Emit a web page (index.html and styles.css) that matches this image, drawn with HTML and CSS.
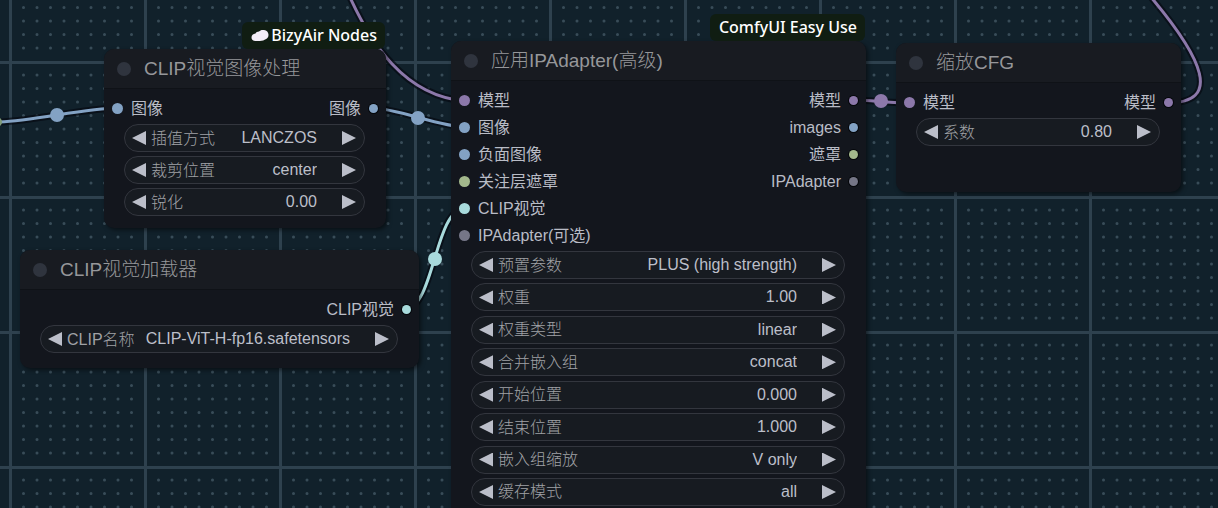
FILE: index.html
```html
<!DOCTYPE html>
<html lang="zh-CN">
<head>
<meta charset="utf-8">
<title>ComfyUI</title>
<link rel="stylesheet" href="styles.css">
</head>
<body>
<main class="canvas">
  <svg class="backdrop" aria-hidden="true">
    <defs>
      <pattern id="grid" x="9" y="61" width="135" height="135" patternUnits="userSpaceOnUse">
        <path class="grid-line" d="M0 1.5H135M1.5 0V135"/>
        <path class="grid-dots" d="M14.500 14H123M14.500 27.500H123M14.500 41H123M14.500 54.500H123M14.500 68H123M14.500 81.500H123M14.500 95H123M14.500 108.500H123M14.500 122H123"/>
      </pattern>
    </defs>
    <rect width="100%" height="100%" fill="url(#grid)"/>
    <g class="link link-image">
      <path class="link-edge" d="M-3 122C27 122 87 108 117 108M372 108C396 108 441 127 465 127"/>
      <path class="link-core" d="M-3 122C27 122 87 108 117 108M372 108C396 108 441 127 465 127"/>
      <circle cx="57" cy="115" r="7"/><circle cx="418" cy="118" r="7"/>
    </g>
    <circle class="port-mask" cx="-3" cy="122" r="5"/>
    <g class="link link-model">
      <path class="link-edge" d="M345 -14C370 45 405 96 465 101M852 100C866 100 895 103 909 103M1167 103C1222 103 1204 60 1150 -4"/>
      <path class="link-core" d="M345 -14C370 45 405 96 465 101M852 100C866 100 895 103 909 103M1167 103C1222 103 1204 60 1150 -4"/>
      <circle cx="881" cy="101" r="7"/>
    </g>
    <g class="link link-clip">
      <path class="link-edge" d="M405 309C434 309 435 209 464 209"/>
      <path class="link-core" d="M405 309C434 309 435 209 464 209"/>
      <circle cx="435" cy="259" r="7"/>
    </g>
  </svg>

  <section class="node node-process">
    <span class="badge"><svg class="cloud" viewBox="0 0 18 13" aria-hidden="true"><path d="M4.500 12C2 12 .5 10.500.5 8.500C.5 6.300 2 4.700 4.500 4.400C5.300 3.200 6.500 2.800 8 2.600C9.200 1.100 11 .7 13 1.100C15.800 1.600 17.400 3.300 17.500 5.800C17.600 8.500 16 10.200 13.600 10.700C11.500 12 8.500 12.200 4.500 12Z"/></svg>BizyAir Nodes</span>
    <header class="node-head"><i class="toggle"></i><h2>CLIP视觉图像处理</h2></header>
    <div class="slots">
      <ul class="inputs"><li class="t-image">图像</li></ul>
      <ul class="outputs"><li class="t-image">图像</li></ul>
    </div>
    <div class="widgets">
      <div class="widget"><button class="prev" aria-label="上一个"></button><label for="interp">插值方式</label><select id="interp"><option>LANCZOS</option></select><button class="next" aria-label="下一个"></button></div>
      <div class="widget"><button class="prev" aria-label="上一个"></button><label for="crop">裁剪位置</label><select id="crop"><option>center</option></select><button class="next" aria-label="下一个"></button></div>
      <div class="widget"><button class="prev" aria-label="减少"></button><label for="sharpen">锐化</label><input id="sharpen" value="0.00"><button class="next" aria-label="增加"></button></div>
    </div>
  </section>

  <section class="node node-loader">
    <header class="node-head"><i class="toggle"></i><h2>CLIP视觉加载器</h2></header>
    <div class="slots">
      <ul class="outputs"><li class="t-clip">CLIP视觉</li></ul>
    </div>
    <div class="widgets">
      <div class="widget"><button class="prev" aria-label="上一个"></button><label for="clip">CLIP名称</label><select id="clip"><option>CLIP-ViT-H-fp16.safetensors</option></select><button class="next" aria-label="下一个"></button></div>
    </div>
  </section>

  <section class="node node-adapter">
    <span class="badge">ComfyUI Easy Use</span>
    <header class="node-head"><i class="toggle"></i><h2>应用IPAdapter(高级)</h2></header>
    <div class="slots">
      <ul class="inputs">
        <li class="t-model">模型</li>
        <li class="t-image">图像</li>
        <li class="t-image">负面图像</li>
        <li class="t-mask">关注层遮罩</li>
        <li class="t-clip">CLIP视觉</li>
        <li class="t-other">IPAdapter(可选)</li>
      </ul>
      <ul class="outputs">
        <li class="t-model">模型</li>
        <li class="t-image">images</li>
        <li class="t-mask">遮罩</li>
        <li class="t-other">IPAdapter</li>
      </ul>
    </div>
    <div class="widgets widgets-spread">
      <div class="widget"><button class="prev" aria-label="上一个"></button><label for="preset">预置参数</label><select id="preset"><option>PLUS (high strength)</option></select><button class="next" aria-label="下一个"></button></div>
      <div class="widget"><button class="prev" aria-label="减少"></button><label for="weight">权重</label><input id="weight" value="1.00"><button class="next" aria-label="增加"></button></div>
      <div class="widget"><button class="prev" aria-label="上一个"></button><label for="wtype">权重类型</label><select id="wtype"><option>linear</option></select><button class="next" aria-label="下一个"></button></div>
      <div class="widget"><button class="prev" aria-label="上一个"></button><label for="combine">合并嵌入组</label><select id="combine"><option>concat</option></select><button class="next" aria-label="下一个"></button></div>
      <div class="widget"><button class="prev" aria-label="减少"></button><label for="start">开始位置</label><input id="start" value="0.000"><button class="next" aria-label="增加"></button></div>
      <div class="widget"><button class="prev" aria-label="减少"></button><label for="end">结束位置</label><input id="end" value="1.000"><button class="next" aria-label="增加"></button></div>
      <div class="widget"><button class="prev" aria-label="上一个"></button><label for="scaling">嵌入组缩放</label><select id="scaling"><option>V only</option></select><button class="next" aria-label="下一个"></button></div>
      <div class="widget"><button class="prev" aria-label="上一个"></button><label for="cache">缓存模式</label><select id="cache"><option>all</option></select><button class="next" aria-label="下一个"></button></div>
    </div>
  </section>

  <section class="node node-cfg">
    <header class="node-head"><i class="toggle"></i><h2>缩放CFG</h2></header>
    <div class="slots">
      <ul class="inputs"><li class="t-model">模型</li></ul>
      <ul class="outputs"><li class="t-model">模型</li></ul>
    </div>
    <div class="widgets">
      <div class="widget"><button class="prev" aria-label="减少"></button><label for="factor">系数</label><input id="factor" value="0.80"><button class="next" aria-label="增加"></button></div>
    </div>
  </section>
</main>
</body>
</html>
```

FILE: styles.css
```css
* { box-sizing: border-box; }

body {
  margin: 0;
  background: #11212b;
  color: #b9bcc6;
  font: 16px/27px "Liberation Sans", "Noto Sans CJK SC", sans-serif;
}

.canvas {
  position: relative;
  height: 100vh;
  overflow: hidden;
}

/* Grid and links */
.backdrop {
  position: absolute;
  inset: 0;
  width: 100%;
  height: 100%;
}
.grid-line { stroke: #2e414e; stroke-width: 3; }
.grid-dots {
  stroke: #384c58;
  stroke-width: 3;
  stroke-linecap: round;
  stroke-dasharray: 0 13.5;
}
.link { fill: none; color: #83a2c4; }
.link-model { color: #8c78aa; }
.link-clip { color: #a8dadc; }
.link circle { fill: currentColor; }
.link-edge { stroke: #060a12; stroke-opacity: .7; stroke-width: 7; }
.link-core { stroke: currentColor; stroke-width: 3; }
.port-mask { fill: #7f9a78; }

/* Nodes sit freely on the canvas */
.node {
  position: absolute;
  background: #13161d;
  border-radius: 10px;
  box-shadow: 2px 2px 4px rgba(0, 0, 0, .5);
}
.node-process { left: 104px; top: 49px; width: 282px; padding-bottom: 12px; }
.node-loader { left: 20px; top: 250px; width: 399px; padding-bottom: 15px; }
.node-adapter { left: 451px; top: 41px; width: 415px; padding-bottom: 15px; }
.node-cfg { left: 896px; top: 43px; width: 285px; padding-bottom: 46px; }

.badge {
  position: absolute;
  right: 1px;
  bottom: 100%;
  display: flex;
  align-items: center;
  gap: 2px;
  padding: 0 8px 0 9px;
  border-radius: 6px;
  background: #101d12;
  color: #fff;
  font: 500 16px/27px "Noto Sans", sans-serif;
  white-space: nowrap;
}
.cloud { width: 18px; height: 13px; fill: #f4eef8; }

.node-head {
  display: flex;
  align-items: center;
  gap: 13px;
  height: 40px;
  padding-left: 13px;
  border-bottom: 1px solid #0f1217;
  border-radius: 10px 10px 0 0;
  background: #181b21;
}
.toggle {
  width: 14px;
  height: 14px;
  border-radius: 50%;
  background: #2f343e;
}
.node-head h2 {
  margin: 0;
  color: #96979a;
  font-size: 19px;
  font-weight: 300;
}

.slots {
  display: flex;
  justify-content: space-between;
  padding: 6px 8px 2px;
}
.slots ul { margin: 0; padding: 0; list-style: none; }
.slots li { display: flex; align-items: center; gap: 8px; }
.slots li::before {
  content: "";
  width: 11px;
  height: 11px;
  border-radius: 50%;
  background: var(--type);
}
.slots .outputs { margin-left: auto; }
.slots .outputs li { flex-direction: row-reverse; }
.slots .outputs li::before {
  width: 9px;
  height: 9px;
  box-shadow: 0 0 0 1px #05070b;
}
.t-image { --type: #83a2c4; }
.t-model { --type: #8c78aa; }
.t-mask { --type: #a3b88c; }
.t-clip { --type: #a8dadc; }
.t-other { --type: #757687; }

.widgets {
  display: flex;
  flex-direction: column;
  justify-content: space-between;
  gap: 4px;
  padding: 0 21px 0 20px;
}
.widgets-spread { min-height: 255px; }
.widget {
  display: flex;
  align-items: center;
  height: 28px;
  padding: 0 8px 0 7px;
  border: 1px solid #33363e;
  border-radius: 14px;
  background: #171b21;
}
.widget label {
  margin-left: 5px;
  color: #a0a2a6;
  font-weight: 300;
  white-space: nowrap;
}
.widget input,
.widget select {
  flex: 1;
  min-width: 0;
  margin-right: 25px;
  padding: 0;
  border: 0;
  outline: 0;
  appearance: none;
  background: none;
  color: #bcbfc9;
  font: inherit;
  line-height: 26px;
  text-align: right;
  text-align-last: right;
}
.prev,
.next {
  flex: none;
  width: 14px;
  height: 14px;
  padding: 0;
  border: 0;
  background: #bbbec9;
}
.prev { clip-path: polygon(0 50%, 100% 0, 100% 100%); }
.next { clip-path: polygon(0 0, 100% 50%, 0 100%); }
```
